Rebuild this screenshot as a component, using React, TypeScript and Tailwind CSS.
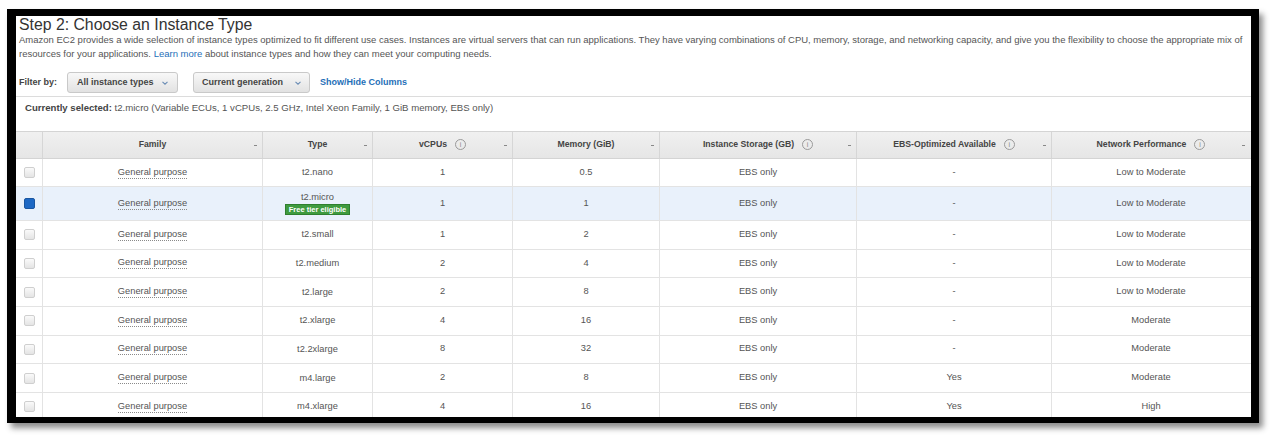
import React from "react";

type Row = { type: string; vcpu: string; mem: string; ebs: string; net: string; selected?: boolean };

const rows: Row[] = [
  { type: "t2.nano", vcpu: "1", mem: "0.5", ebs: "-", net: "Low to Moderate" },
  { type: "t2.micro", vcpu: "1", mem: "1", ebs: "-", net: "Low to Moderate", selected: true },
  { type: "t2.small", vcpu: "1", mem: "2", ebs: "-", net: "Low to Moderate" },
  { type: "t2.medium", vcpu: "2", mem: "4", ebs: "-", net: "Low to Moderate" },
  { type: "t2.large", vcpu: "2", mem: "8", ebs: "-", net: "Low to Moderate" },
  { type: "t2.xlarge", vcpu: "4", mem: "16", ebs: "-", net: "Moderate" },
  { type: "t2.2xlarge", vcpu: "8", mem: "32", ebs: "-", net: "Moderate" },
  { type: "m4.large", vcpu: "2", mem: "8", ebs: "Yes", net: "Moderate" },
  { type: "m4.xlarge", vcpu: "4", mem: "16", ebs: "Yes", net: "High" },
];

const cols = "grid grid-cols-[27px_220px_110px_140px_147px_197px_195px_198px]";

function Chevron({ className }: { className?: string }) {
  return (
    <svg width="6" height="4" viewBox="0 0 6 4" className={className}>
      <path d="M0.5 0.8 L3 3.2 L5.5 0.8" fill="none" stroke="currentColor" strokeWidth="1.1" />
    </svg>
  );
}

function Info() {
  return (
    <span className="inline-flex items-center justify-center w-[11px] h-[11px] rounded-full border border-[#9a9a9a] text-[7px] leading-none text-[#888] font-normal ml-[8px]">
      i
    </span>
  );
}

function Head({ label, info, last }: { label: string; info?: boolean; last?: boolean }) {
  return (
    <div className={`relative flex items-center justify-center ${last ? "" : "border-r border-[#d6d6d6]"}`}>
      <span className="flex items-center text-[8.7px] font-bold text-[#444]">
        {label}
        {info && <Info />}
      </span>
      <span className="absolute right-[5px] top-[13px] w-[3px] h-[1px] bg-[#888]" />
    </div>
  );
}

function Cell({ children, last }: { children: React.ReactNode; last?: boolean }) {
  return (
    <div className={`flex flex-col items-center justify-center text-[9.3px] text-[#555] ${last ? "" : "border-r border-[#e3e3e3]"}`}>
      {children}
    </div>
  );
}

export default function App() {
  return (
    <div
      className="w-[1272px] h-[440px] bg-white overflow-hidden pt-[9px] pl-[7px]"
      style={{ fontFamily: '"Liberation Sans", Arial, sans-serif' }}
    >
      <div className="w-[1252px] h-[414px] border-black border-t-[7px] border-l-[9px] border-r-[8px] border-b-[6px] shadow-[4px_5px_6px_rgba(0,0,0,0.45)] bg-white overflow-hidden">
        <div className="h-[17px] pl-[3px] text-[15.8px] leading-[17px] text-[#333] whitespace-nowrap">
          Step 2: Choose an Instance Type
        </div>
        <div className="pl-[3px] text-[9.5px] leading-[14px] text-[#555] whitespace-nowrap">
          <div>
            Amazon EC2 provides a wide selection of instance types optimized to fit different use cases. Instances are virtual servers that can run applications. They have varying combinations of CPU, memory, storage, and networking capacity, and give you the flexibility to choose the appropriate mix of
          </div>
          <div>
            resources for your applications. <span className="text-[#1f6fb8]">Learn more</span> about instance types and how they can meet your computing needs.
          </div>
        </div>
        <div className="mt-[11px] h-[21px] flex items-center pl-[3px] text-[9px] font-bold text-[#444]">
          <span className="w-[48px]">Filter by:</span>
          <div className="h-[21px] w-[111px] flex items-center justify-between px-[9px] rounded-[3px] border border-[#c9c9c9] bg-gradient-to-b from-[#f8f8f8] to-[#e2e2e2]">
            <span>All instance types</span>
            <Chevron className="text-[#6b8db5]" />
          </div>
          <div className="ml-[15px] h-[21px] w-[117px] flex items-center justify-between px-[8px] rounded-[3px] border border-[#c9c9c9] bg-gradient-to-b from-[#f8f8f8] to-[#e2e2e2]">
            <span>Current generation</span>
            <Chevron className="text-[#6b8db5]" />
          </div>
          <span className="ml-[10px] text-[#1f6fb8]">Show/Hide Columns</span>
        </div>
        <div className="mt-[3px] border-t border-[#dcdcdc]" />
        <div className="h-[34px] pt-[5px] pl-[9px] text-[9.6px] leading-[12px] text-[#555] whitespace-nowrap">
          <span className="font-bold text-[#444]">Currently selected:</span> t2.micro (Variable ECUs, 1 vCPUs, 2.5 GHz, Intel Xeon Family, 1 GiB memory, EBS only)
        </div>
        <div className={`${cols} h-[28px] bg-gradient-to-b from-[#f0f0f0] to-[#e6e6e6] border-t border-b border-[#d4d4d4]`}>
          <div className="border-r border-[#d6d6d6]" />
          <Head label="Family" />
          <Head label="Type" />
          <Head label="vCPUs" info />
          <Head label="Memory (GiB)" />
          <Head label="Instance Storage (GB)" info />
          <Head label="EBS-Optimized Available" info />
          <Head label="Network Performance" info last />
        </div>
        {rows.map((r, i) => (
          <div
            key={r.type}
            className={`${cols} border-b border-[#e3e3e3] ${r.selected ? "bg-[#e9f1fb]" : "bg-white"} ${
              i === 0 ? "h-[28px]" : r.selected ? "h-[34px]" : "h-[28.67px]"
            }`}
          >
            <div className="flex items-center justify-center border-r border-[#e3e3e3]">
              {r.selected ? (
                <span className="w-[11px] h-[11px] rounded-[2px] bg-[#1d68c4] border border-[#1a56a0]" />
              ) : (
                <span className="w-[11px] h-[11px] rounded-[2px] border border-[#cfcfcf] bg-gradient-to-b from-[#fafafa] to-[#e4e4e4]" />
              )}
            </div>
            <Cell>
              <span className="border-b border-dotted border-[#8a8a8a] leading-[11px]">General purpose</span>
            </Cell>
            <Cell>
              <span className="leading-[11px]">{r.type}</span>
              {r.selected && (
                <span className="mt-[1px] px-[3px] bg-[#3f9b3f] border border-[#2f7f2f] text-white font-bold text-[7.5px] leading-[9px]">
                  Free tier eligible
                </span>
              )}
            </Cell>
            <Cell>{r.vcpu}</Cell>
            <Cell>{r.mem}</Cell>
            <Cell>EBS only</Cell>
            <Cell>{r.ebs}</Cell>
            <Cell last>{r.net}</Cell>
          </div>
        ))}
      </div>
    </div>
  );
}
